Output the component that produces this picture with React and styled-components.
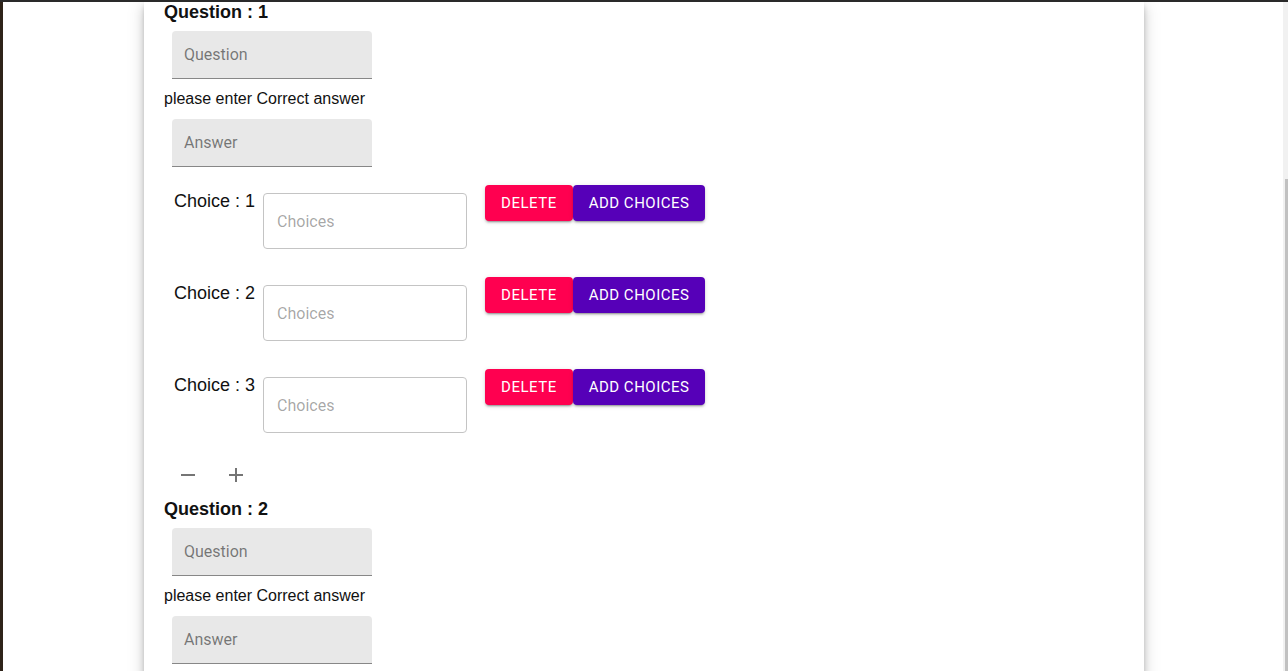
import styled, { createGlobalStyle } from "styled-components"
import React from 'react';

const GlobalStyle = createGlobalStyle`
  html, body {
    margin: 0;
    padding: 0;
    overflow: hidden;
    background: #fff;
  }
`

const Frame = styled.div`
  display: flex;
  flex-direction: column;
  height: 100vh;
`
const TopBar = styled.div`
  height: 2px;
  background: #2a2a2a;
  flex-shrink: 0;
`
const Body = styled.div`
  display: flex;
  flex: 1;
  min-height: 0;
`
const LeftStrip = styled.div`
  width: 3px;
  background: #2e2319;
  flex-shrink: 0;
`
const Main = styled.div`
  flex: 1;
  overflow: hidden;
  display: flex;
  align-items: flex-start;
  padding-left: 141px;
`
const Scrollbar = styled.div`
  width: 5px;
  flex-shrink: 0;
  background: #f1f1f1;
  display: flex;
  flex-direction: column;
  align-items: flex-end;
`
const Thumb = styled.div`
  margin-top: 177px;
  width: 3px;
  flex: 1;
  background: #c1c1c1;
`
const Card = styled.div`
  width: 1000px;
  background: #fff;
  padding: 0 20px 80px;
  box-sizing: border-box;
  box-shadow: 0 3px 5px -1px rgba(0,0,0,0.2), 0 6px 10px 0 rgba(0,0,0,0.14), 0 1px 18px 0 rgba(0,0,0,0.12);
`
const Heading = styled.h3`
  margin: 0;
  font-family: "Liberation Sans", Arial, sans-serif;
  font-weight: 700;
  font-size: 18px;
  line-height: 21px;
  color: #111;
`
const FilledInput = styled.input`
  display: block;
  margin: 8px 0 8px 8px;
  width: 200px;
  height: 48px;
  box-sizing: border-box;
  padding: 0 12px;
  border: none;
  border-bottom: 1px solid rgba(0,0,0,0.42);
  border-radius: 4px 4px 0 0;
  background: #e8e8e8;
  font-family: Roboto, sans-serif;
  font-size: 16px;
  outline: none;
  &::placeholder {
    color: rgba(0,0,0,0.5);
  }
`
const Hint = styled.p`
  margin: 0;
  font-family: "Liberation Sans", Arial, sans-serif;
  font-size: 16px;
  line-height: 24px;
  color: #111;
`
const ChoiceList = styled.div`
  display: flex;
  flex-direction: column;
  gap: 28px;
  margin-top: 18px;
`
const ChoiceRow = styled.div`
  display: flex;
  align-items: flex-start;
  padding-left: 10px;
`
const ChoiceLabel = styled.span`
  margin-top: 6px;
  margin-right: 8px;
  font-family: "Liberation Sans", Arial, sans-serif;
  font-size: 18px;
  line-height: 21px;
  color: #111;
`
const OutlinedInput = styled.input`
  margin-top: 8px;
  width: 204px;
  height: 56px;
  box-sizing: border-box;
  padding: 0 13px;
  border: 1px solid #c4c4c4;
  border-radius: 4px;
  background: #fff;
  font-family: Roboto, sans-serif;
  font-size: 16px;
  outline: none;
  &::placeholder {
    color: rgba(0,0,0,0.36);
  }
`
const ButtonGroup = styled.div`
  display: flex;
  margin-left: 18px;
`
const Button = styled.button`
  height: 36px;
  padding: 0 16px;
  border: none;
  border-radius: 4px;
  background: ${p => p.$bg};
  color: #fff;
  font-family: Roboto, sans-serif;
  font-weight: 400;
  font-size: 15px;
  letter-spacing: 0.5px;
  text-transform: uppercase;
  box-shadow: 0 3px 1px -2px rgba(0,0,0,0.2), 0 2px 2px 0 rgba(0,0,0,0.14), 0 1px 5px 0 rgba(0,0,0,0.12);
  cursor: pointer;
`
const IconRow = styled.div`
  display: flex;
  margin-top: 18px;
`
const IconButton = styled.button`
  width: 48px;
  height: 48px;
  padding: 12px;
  border: none;
  background: none;
  border-radius: 50%;
  display: flex;
  align-items: center;
  justify-content: center;
  color: rgba(0,0,0,0.54);
  cursor: pointer;
  svg {
    width: 24px;
    height: 24px;
    fill: currentColor;
  }
`

const RemoveIcon = () => (
  <svg viewBox="0 0 24 24"><path d="M19 13H5v-2h14v2z" /></svg>
)
const AddIcon = () => (
  <svg viewBox="0 0 24 24"><path d="M19 13h-6v6h-2v-6H5v-2h6V5h2v6h6v2z" /></svg>
)

const QuestionBlock = ({ num, choices }) => (
  <>
    <Heading>Question : {num}</Heading>
    <FilledInput placeholder="Question" />
    <Hint>please enter Correct answer</Hint>
    <FilledInput placeholder="Answer" />
    {choices > 0 && (
      <>
        <ChoiceList>
          {Array.from({ length: choices }, (_, i) => (
            <ChoiceRow key={i}>
              <ChoiceLabel>Choice : {i + 1}</ChoiceLabel>
              <OutlinedInput placeholder="Choices" />
              <ButtonGroup>
                <Button $bg="#ff0050">Delete</Button>
                <Button $bg="#5600b8">Add Choices</Button>
              </ButtonGroup>
            </ChoiceRow>
          ))}
        </ChoiceList>
        <IconRow>
          <IconButton><RemoveIcon /></IconButton>
          <IconButton><AddIcon /></IconButton>
        </IconRow>
      </>
    )}
  </>
)

const App = () => {
  return (
    <Frame>
      <GlobalStyle />
      <TopBar />
      <Body>
        <LeftStrip />
        <Main>
          <Card>
            <QuestionBlock num={1} choices={3} />
            <QuestionBlock num={2} choices={0} />
          </Card>
        </Main>
        <Scrollbar><Thumb /></Scrollbar>
      </Body>
    </Frame>
  )
}

export default App
